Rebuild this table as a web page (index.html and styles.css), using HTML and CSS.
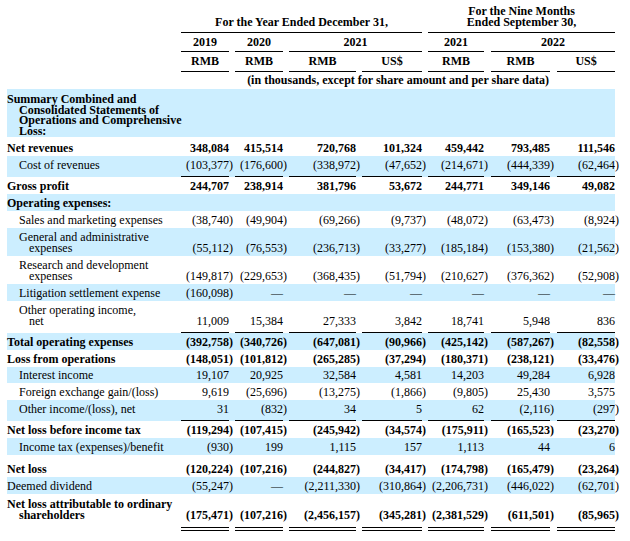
FILE: index.html
```html
<!DOCTYPE html>
<html>
<head>
<meta charset="utf-8">
<link rel="stylesheet" href="styles.css">
</head>
<body>
<table class="fin">
<colgroup>
<col class="w-lab"><col class="w-48"><col class="w-6"><col class="w-48"><col class="w-6"><col class="w-67"><col class="w-6"><col class="w-60"><col class="w-6"><col class="w-56"><col class="w-7"><col class="w-59"><col class="w-7"><col class="w-58"><col class="w-6">
</colgroup>
<tbody>
<tr class="h1">
<td></td>
<td class="hc" colspan="7">For the Year Ended December 31,</td>
<td></td>
<td class="hc" colspan="5">For the Nine Months<br>Ended September 30,</td>
<td></td>
</tr>
<tr class="h2">
<td></td>
<td class="hc">2019</td><td></td>
<td class="hc">2020</td><td></td>
<td class="hc" colspan="3">2021</td><td></td>
<td class="hc">2021</td><td></td>
<td class="hc" colspan="3">2022</td><td></td>
</tr>
<tr class="h3">
<td></td>
<td class="hc">RMB</td><td></td>
<td class="hc">RMB</td><td></td>
<td class="hc">RMB</td><td></td>
<td class="hc">US$</td><td></td>
<td class="hc">RMB</td><td></td>
<td class="hc">RMB</td><td></td>
<td class="hc">US$</td><td></td>
</tr>
<tr class="h4">
<td></td>
<td class="hn" colspan="13">(in thousands, except for share amount and per share data)</td>
<td></td>
</tr>

<tr class="s sum b">
<td class="lb">Summary Combined and<br>Consolidated Statements of<br>Operations and Comprehensive<br>Loss:</td>
<td></td><td></td><td></td><td></td><td></td><td></td><td></td><td></td><td></td><td></td><td></td><td></td><td></td><td></td>
</tr>

<tr class="b nr">
<td class="lb">Net revenues</td>
<td class="n">348,084</td><td class="p"></td>
<td class="n">415,514</td><td class="p"></td>
<td class="n">720,768</td><td class="p"></td>
<td class="n">101,324</td><td class="p"></td>
<td class="n">459,442</td><td class="p"></td>
<td class="n">793,485</td><td class="p"></td>
<td class="n">111,546</td><td class="p"></td>
</tr>
<tr class="s u">
<td class="li">Cost of revenues</td>
<td class="n ul">(103,377</td><td class="p">)</td>
<td class="n ul">(176,600</td><td class="p">)</td>
<td class="n ul">(338,972</td><td class="p">)</td>
<td class="n ul">(47,652</td><td class="p">)</td>
<td class="n ul">(214,671</td><td class="p">)</td>
<td class="n ul">(444,339</td><td class="p">)</td>
<td class="n ul">(62,464</td><td class="p">)</td>
</tr>
<tr class="b">
<td class="lb">Gross profit</td>
<td class="n">244,707</td><td class="p"></td>
<td class="n">238,914</td><td class="p"></td>
<td class="n">381,796</td><td class="p"></td>
<td class="n">53,672</td><td class="p"></td>
<td class="n">244,771</td><td class="p"></td>
<td class="n">349,146</td><td class="p"></td>
<td class="n">49,082</td><td class="p"></td>
</tr>
<tr class="s b">
<td class="lb">Operating expenses:</td>
<td></td><td></td><td></td><td></td><td></td><td></td><td></td><td></td><td></td><td></td><td></td><td></td><td></td><td></td>
</tr>
<tr>
<td class="li">Sales and marketing expenses</td>
<td class="n">(38,740</td><td class="p">)</td>
<td class="n">(49,904</td><td class="p">)</td>
<td class="n">(69,266</td><td class="p">)</td>
<td class="n">(9,737</td><td class="p">)</td>
<td class="n">(48,072</td><td class="p">)</td>
<td class="n">(63,473</td><td class="p">)</td>
<td class="n">(8,924</td><td class="p">)</td>
</tr>
<tr class="s">
<td class="li">General and administrative<br>expenses</td>
<td class="n">(55,112</td><td class="p">)</td>
<td class="n">(76,553</td><td class="p">)</td>
<td class="n">(236,713</td><td class="p">)</td>
<td class="n">(33,277</td><td class="p">)</td>
<td class="n">(185,184</td><td class="p">)</td>
<td class="n">(153,380</td><td class="p">)</td>
<td class="n">(21,562</td><td class="p">)</td>
</tr>
<tr>
<td class="li">Research and development<br>expenses</td>
<td class="n">(149,817</td><td class="p">)</td>
<td class="n">(229,653</td><td class="p">)</td>
<td class="n">(368,435</td><td class="p">)</td>
<td class="n">(51,794</td><td class="p">)</td>
<td class="n">(210,627</td><td class="p">)</td>
<td class="n">(376,362</td><td class="p">)</td>
<td class="n">(52,908</td><td class="p">)</td>
</tr>
<tr class="s">
<td class="li">Litigation settlement expense</td>
<td class="n">(160,098</td><td class="p">)</td>
<td class="n">—</td><td class="p"></td>
<td class="n">—</td><td class="p"></td>
<td class="n">—</td><td class="p"></td>
<td class="n">—</td><td class="p"></td>
<td class="n">—</td><td class="p"></td>
<td class="n">—</td><td class="p"></td>
</tr>
<tr class="u">
<td class="li">Other operating income,<br>net</td>
<td class="n ul">11,009</td><td class="p"></td>
<td class="n ul">15,384</td><td class="p"></td>
<td class="n ul">27,333</td><td class="p"></td>
<td class="n ul">3,842</td><td class="p"></td>
<td class="n ul">18,741</td><td class="p"></td>
<td class="n ul">5,948</td><td class="p"></td>
<td class="n ul">836</td><td class="p"></td>
</tr>
<tr class="s b">
<td class="lb">Total operating expenses</td>
<td class="n">(392,758</td><td class="p">)</td>
<td class="n">(340,726</td><td class="p">)</td>
<td class="n">(647,081</td><td class="p">)</td>
<td class="n">(90,966</td><td class="p">)</td>
<td class="n">(425,142</td><td class="p">)</td>
<td class="n">(587,267</td><td class="p">)</td>
<td class="n">(82,558</td><td class="p">)</td>
</tr>
<tr class="b">
<td class="lb">Loss from operations</td>
<td class="n">(148,051</td><td class="p">)</td>
<td class="n">(101,812</td><td class="p">)</td>
<td class="n">(265,285</td><td class="p">)</td>
<td class="n">(37,294</td><td class="p">)</td>
<td class="n">(180,371</td><td class="p">)</td>
<td class="n">(238,121</td><td class="p">)</td>
<td class="n">(33,476</td><td class="p">)</td>
</tr>
<tr class="s short">
<td class="li">Interest income</td>
<td class="n">19,107</td><td class="p"></td>
<td class="n">20,925</td><td class="p"></td>
<td class="n">32,584</td><td class="p"></td>
<td class="n">4,581</td><td class="p"></td>
<td class="n">14,203</td><td class="p"></td>
<td class="n">49,284</td><td class="p"></td>
<td class="n">6,928</td><td class="p"></td>
</tr>
<tr>
<td class="li">Foreign exchange gain/(loss)</td>
<td class="n">9,619</td><td class="p"></td>
<td class="n">(25,696</td><td class="p">)</td>
<td class="n">(13,275</td><td class="p">)</td>
<td class="n">(1,866</td><td class="p">)</td>
<td class="n">(9,805</td><td class="p">)</td>
<td class="n">25,430</td><td class="p"></td>
<td class="n">3,575</td><td class="p"></td>
</tr>
<tr class="s u">
<td class="li">Other income/(loss), net</td>
<td class="n ul">31</td><td class="p"></td>
<td class="n ul">(832</td><td class="p">)</td>
<td class="n ul">34</td><td class="p"></td>
<td class="n ul">5</td><td class="p"></td>
<td class="n ul">62</td><td class="p"></td>
<td class="n ul">(2,116</td><td class="p">)</td>
<td class="n ul">(297</td><td class="p">)</td>
</tr>
<tr class="b">
<td class="lb">Net loss before income tax</td>
<td class="n">(119,294</td><td class="p">)</td>
<td class="n">(107,415</td><td class="p">)</td>
<td class="n">(245,942</td><td class="p">)</td>
<td class="n">(34,574</td><td class="p">)</td>
<td class="n">(175,911</td><td class="p">)</td>
<td class="n">(165,523</td><td class="p">)</td>
<td class="n">(23,270</td><td class="p">)</td>
</tr>
<tr class="s">
<td class="li">Income tax (expenses)/benefit</td>
<td class="n">(930</td><td class="p">)</td>
<td class="n">199</td><td class="p"></td>
<td class="n">1,115</td><td class="p"></td>
<td class="n">157</td><td class="p"></td>
<td class="n">1,113</td><td class="p"></td>
<td class="n">44</td><td class="p"></td>
<td class="n">6</td><td class="p"></td>
</tr>
<tr class="b nl">
<td class="lb">Net loss</td>
<td class="n">(120,224</td><td class="p">)</td>
<td class="n">(107,216</td><td class="p">)</td>
<td class="n">(244,827</td><td class="p">)</td>
<td class="n">(34,417</td><td class="p">)</td>
<td class="n">(174,798</td><td class="p">)</td>
<td class="n">(165,479</td><td class="p">)</td>
<td class="n">(23,264</td><td class="p">)</td>
</tr>
<tr class="s">
<td class="lb">Deemed dividend</td>
<td class="n">(55,247</td><td class="p">)</td>
<td class="n">—</td><td class="p"></td>
<td class="n">(2,211,330</td><td class="p">)</td>
<td class="n">(310,864</td><td class="p">)</td>
<td class="n">(2,206,731</td><td class="p">)</td>
<td class="n">(446,022</td><td class="p">)</td>
<td class="n">(62,701</td><td class="p">)</td>
</tr>
<tr class="b uu">
<td class="lb">Net loss attributable to ordinary<br>shareholders</td>
<td class="n dl">(175,471</td><td class="p">)</td>
<td class="n dl">(107,216</td><td class="p">)</td>
<td class="n dl">(2,456,157</td><td class="p">)</td>
<td class="n dl">(345,281</td><td class="p">)</td>
<td class="n dl">(2,381,529</td><td class="p">)</td>
<td class="n dl">(611,501</td><td class="p">)</td>
<td class="n dl">(85,965</td><td class="p">)</td>
</tr>
</tbody>
</table>
</body>
</html>
```

FILE: styles.css
```css
html, body {
  margin: 0;
  padding: 0;
  background: #ffffff;
}

body {
  font-family: "Liberation Serif", "Times New Roman", serif;
  font-size: 12px;
  color: #000000;
}

.fin {
  border-collapse: separate;
  border-spacing: 0;
  table-layout: fixed;
  width: 614px;
  margin-left: 7px;
}

.w-lab { width: 174px; }
.w-48 { width: 48px; }
.w-6 { width: 6px; }
.w-7 { width: 7px; }
.w-67 { width: 67px; }
.w-60 { width: 60px; }
.w-56 { width: 56px; }
.w-59 { width: 59px; }
.w-58 { width: 58px; }

.fin td {
  padding: 4px 0 2px 0;
  line-height: 11px;
  vertical-align: bottom;
  white-space: nowrap;
}

/* header */
.fin td.hc {
  font-weight: bold;
  text-align: center;
  border-bottom: 1px solid #000000;
}
.fin td.hn {
  font-weight: bold;
  text-align: center;
}
.fin .h1 td { padding-top: 6px; padding-bottom: 4px; }
.fin .h2 td { padding-top: 4px; padding-bottom: 3px; }
.fin .h3 td { padding-top: 4px; padding-bottom: 4px; }
.fin .h4 td { padding-top: 3px; padding-bottom: 3px; }

/* rows */
.fin .s td { background-color: #cceeff; }
.fin .s td:last-child { background-color: transparent; }
.fin .b td { font-weight: bold; }

.fin .sum td { line-height: 10.5px; padding-top: 5px; padding-bottom: 1px; }
.fin .nr td { padding-top: 6px; }
.fin .short td { padding-top: 3px; }
.fin .nl td { padding-top: 9px; }

/* single underline rows */
.fin .u td { padding-bottom: 6px; }
.fin .u td.ul {
  padding-bottom: 5px;
  border-bottom: 1px solid #000000;
}

/* double underline row */
.fin .uu td { padding-top: 5px; padding-bottom: 10px; }
.fin .uu td.dl {
  padding-bottom: 6px;
  border-bottom: 4px double #000000;
}

/* labels */
.fin td.lb {
  padding-left: 12px;
  text-indent: -12px;
}
.fin td.li {
  padding-left: 22px;
  text-indent: -10px;
}

.fin td.n { text-align: right; }
.fin td.p { text-align: left; }
```
